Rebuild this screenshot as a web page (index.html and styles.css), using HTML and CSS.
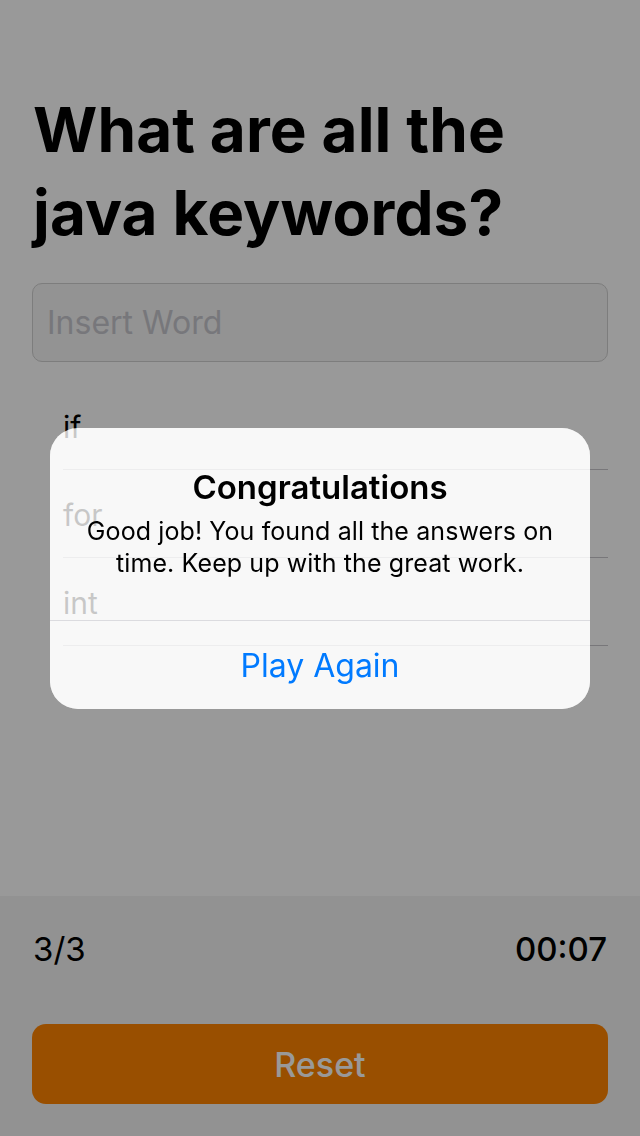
FILE: index.html
```html
<!DOCTYPE html>
<html lang="en">
<head>
<meta charset="utf-8">
<title>Java keywords quiz</title>
<link rel="stylesheet" href="styles.css">
</head>
<body>
<div class="screen">
  <main class="quiz">
    <h1 class="question">What are all the java keywords?</h1>
    <div class="field"><span class="placeholder">Insert Word</span></div>
    <ul class="answers">
      <li class="answer"><span class="answer-text">if</span></li>
      <li class="answer"><span class="answer-text">for</span></li>
      <li class="answer"><span class="answer-text">int</span></li>
    </ul>
  </main>
  <footer class="footer">
    <div class="stats">
      <span class="score">3/3</span>
      <span class="timer">00:07</span>
    </div>
    <button class="reset">Reset</button>
  </footer>
  <div class="dim"></div>
  <div class="alert" role="alertdialog">
    <div class="alert-body">
      <h2 class="alert-title">Congratulations</h2>
      <p class="alert-message">Good job! You found all the answers on time. Keep up with the great work.</p>
    </div>
    <button class="alert-action">Play Again</button>
  </div>
</div>
</body>
</html>
```
FILE: styles.css
```css
* { box-sizing: border-box; }
html, body {
  margin: 0;
  padding: 0;
}
body {
  font-family: Inter, "Noto Sans", "Liberation Sans", sans-serif;
  color: #000;
  background: #fff;
}
.screen {
  position: relative;
  width: 640px;
  height: 1136px;
  display: flex;
  flex-direction: column;
  overflow: hidden;
}
.quiz {
  flex: 1;
  background: #fff;
  padding: 0 32px;
}
.question {
  margin: 88px 0 0 0;
  font-size: 62px;
  line-height: 83px;
  font-weight: 700;
  letter-spacing: 0.1px;
  padding-left: 1px;
  width: 540px;
}
.field {
  margin-top: 29px;
  height: 79px;
  border: 1px solid #d0d0d0;
  border-radius: 10px;
  background: #f5f5f5;
  display: flex;
  align-items: center;
  padding-left: 14px;
}
.placeholder {
  font-size: 32px;
  color: #c7c7cd;
}
.answers {
  list-style: none;
  margin: 20px 0 0 0;
  padding: 0 0 0 31px;
}
.answer {
  height: 88px;
  border-bottom: 1px solid #c8c7cc;
  display: flex;
  align-items: center;
}
.answer-text {
  font-size: 30px;
  padding-top: 2px;
}
.footer {
  height: 240px;
  background: #f4f4f4;
  padding: 0 32px;
  display: flex;
  flex-direction: column;
}
.stats {
  margin-top: 33px;
  height: 40px;
  display: flex;
  justify-content: space-between;
  align-items: center;
  font-size: 33px;
}
.score { padding-left: 1px; }
.timer { font-weight: 500; padding-right: 1px; }
.reset {
  margin-top: 55px;
  height: 80px;
  border: none;
  border-radius: 14px;
  background: #ff8400;
  color: #fff;
  font-family: inherit;
  font-size: 34px;
  font-weight: 500;
}
.dim {
  position: absolute;
  inset: 0;
  background: rgba(0, 0, 0, 0.4);
}
.alert {
  position: absolute;
  left: 50px;
  top: 428px;
  width: 540px;
  height: 281px;
  border-radius: 28px;
  background: rgba(255, 255, 255, 0.78);
  -webkit-backdrop-filter: brightness(1.45);
  backdrop-filter: brightness(1.45);
  display: flex;
  flex-direction: column;
  overflow: hidden;
}
.alert-body {
  padding: 40px 26px 41px;
  text-align: center;
  border-bottom: 1px solid #dbdbdf;
}
.alert-title {
  margin: 0;
  font-size: 33px;
  line-height: 38px;
  font-weight: 600;
}
.alert-message {
  margin: 9px 0 0 0;
  font-size: 25px;
  line-height: 32px;
  letter-spacing: 0.1px;
}
.alert-action {
  flex: 1;
  border: none;
  background: transparent;
  font-family: inherit;
  font-size: 32px;
  color: #007aff;
  padding: 0;
}
```
